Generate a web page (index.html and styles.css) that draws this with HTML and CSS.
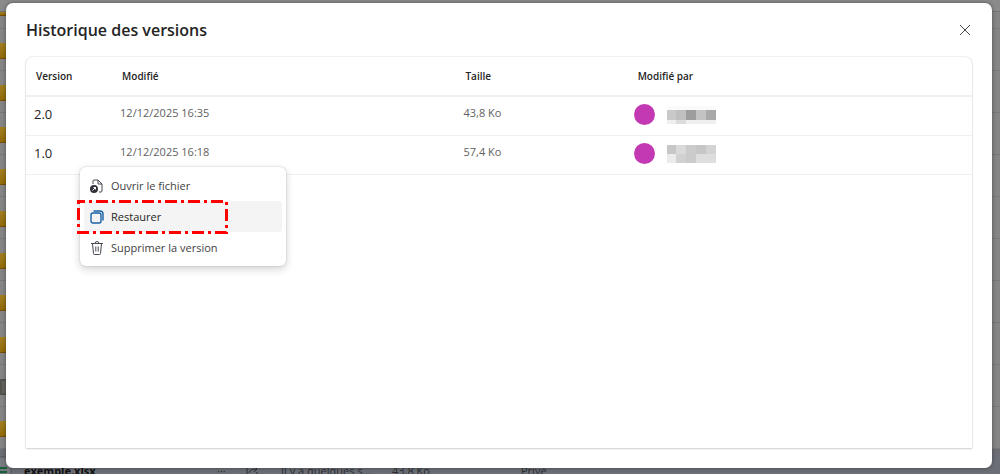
FILE: index.html
```html
<!DOCTYPE html>
<html lang="fr">
<head>
<meta charset="utf-8">
<title>Historique des versions</title>
<link rel="stylesheet" href="styles.css">
</head>
<body>
<div class="files" aria-hidden="true">
  <div class="files-head"></div>
  <div class="file first"><span class="folder"></span></div>
  <div class="file"><span class="folder"></span></div>
  <div class="file"><span class="folder"></span></div>
  <div class="file"><span class="folder"></span></div>
  <div class="file"><span class="folder"></span></div>
  <div class="file"><span class="folder"></span></div>
  <div class="file"><span class="folder"></span></div>
  <div class="file"><span class="folder"></span></div>
  <div class="file"><span class="folder"></span></div>
  <div class="file"><span class="archive"></span></div>
  <div class="file"><span class="folder"></span></div>
  <div class="file selected">
    <svg class="sheet" viewBox="0 0 12 30"><path d="M0 1h11v28H0" fill="#777a7e" stroke="#55585c"/><path d="M0 12h7M0 16h7M0 20h7" stroke="#17613a" stroke-width="2"/></svg>
    <b class="f-name">exemple.xlsx</b>
    <span class="f-more">···</span>
    <svg class="f-share" viewBox="0 0 12 12"><path d="M5 1H1v10h10V7M3 8c1-3 3-4 7-4M8 1l3 3-3 3" fill="none" stroke="#2c2e33"/></svg>
    <span class="f-date">Il y a quelques s...</span>
    <span class="f-size">43,8 Ko</span>
    <span class="f-access">Privé</span>
  </div>
</div>

<section class="dialog" role="dialog" aria-labelledby="title">
  <header class="dialog-head">
    <h1 id="title">Historique des versions</h1>
    <button class="close" type="button" aria-label="Fermer"><svg viewBox="0 0 12 12"><path d="M1 1l10 10M11 1L1 11" stroke="#444" fill="none"/></svg></button>
  </header>
  <div class="panel">
    <table class="versions">
      <thead>
        <tr><th class="c-version">Version</th><th class="c-date">Modifié</th><th class="c-size">Taille</th><th>Modifié par</th></tr>
      </thead>
      <tbody>
        <tr>
          <td class="num">2.0</td><td>12/12/2025 16:35</td><td>43,8 Ko</td>
          <td><div class="person"><span class="avatar"></span>
            <svg class="mask" viewBox="0 0 49 18" shape-rendering="crispEdges"><path fill="#fafafa" d="M0 0h49v4H0z"/><path fill="#c9c9c9" d="M0 4h9v10H0z"/><path fill="#bfbfbf" d="M9 4h10v10H9z"/><path fill="#9d9d9d" d="M19 4h10v10H19z"/><path fill="#c3c3c3" d="M29 4h10v10H29z"/><path fill="#a9a9a9" d="M39 4h10v10H39z"/><path fill="#efefef" d="M0 14h49v5H0z"/><path fill="#dcdcdc" d="M9 14h10v5H9z"/></svg></div></td>
        </tr>
        <tr>
          <td class="num">1.0</td><td>12/12/2025 16:18</td><td>57,4 Ko</td>
          <td><div class="person"><span class="avatar"></span>
            <svg class="mask" viewBox="0 0 49 18" shape-rendering="crispEdges"><path fill="#c7c7c7" d="M0 0h9v9H0z"/><path fill="#dadada" d="M9 0h10v9H9z"/><path fill="#cbcbcb" d="M19 0h10v18H19z"/><path fill="#c6c6c6" d="M29 0h10v9H29z"/><path fill="#d3d3d3" d="M39 0h10v9H39z"/><path fill="#ebebeb" d="M0 9h9v9H0z"/><path fill="#d1d1d1" d="M9 9h10v9H9z"/><path fill="#dedede" d="M29 9h20v9H29z"/></svg></div></td>
        </tr>
      </tbody>
    </table>
  </div>
</section>

<div class="menu" role="menu">
  <button class="item" type="button" role="menuitem">
    <svg viewBox="0 0 14 14" fill="none" stroke="#4a4550"><path d="M3 5V2q0-1 1-1h4l4 4v7q0 1-1 1H9M8 1v4h4"/><circle cx="4" cy="10" r="4" fill="#33313a" stroke="none"/><path d="M2.500 11.500l3-3M3.500 8.500h2v2" stroke="#fff"/></svg>
    Ouvrir le fichier</button>
  <button class="item active" type="button" role="menuitem">
    <svg viewBox="0 0 14 14" fill="none" stroke="#1762a6" stroke-width="1.400"><rect x="1" y="3" width="10" height="10" rx="2"/><path d="M3.500 1H10q3 0 3 3v6.500"/></svg>
    Restaurer</button>
  <button class="item" type="button" role="menuitem">
    <svg viewBox="0 0 14 14" fill="none" stroke="#4a4550"><path d="M1 2.500h12M5 2.500q0-2 2-2t2 2M2.500 2.500l1 10q0 1 1 1h5q1 0 1-1l1-10M5.800 5.500v5M8.200 5.500v5"/></svg>
    Supprimer la version</button>
  <svg class="highlight" viewBox="0 0 151 34"><path d="M0 1.500h149.500v31H1.500V0"/></svg>
</div>
</body>
</html>
```
FILE: styles.css
```css
* { box-sizing: border-box; }
body {
  margin: 0;
  height: 100vh;
  overflow: hidden;
  position: relative;
  background: #858585;
  color: #242424;
  font-family: "Segoe UI", "Open Sans", "Noto Sans", sans-serif;
  font-size: 11px;
}

.files-head { height: 12px; border-bottom: 1px solid #747474; background: #8b8b8b; }
.file {
  height: 42px;
  display: flex;
  align-items: center;
  padding-top: 2px;
  border-bottom: 1px solid #787878;
}
.file.first { height: 17px; padding: 0; align-items: flex-start; }
.file.first .folder { height: 4px; }
.folder {
  width: 14px;
  height: 16px;
  background: linear-gradient(#a18022, #916a08);
  border-bottom: 1px solid #7c4c08;
}
.archive { width: 14px; height: 16px; background: #66645f; border: 2px solid #55534f; }
.file.selected { background: #6b6e75; color: #2c2e33; white-space: nowrap; }
.sheet { width: 12px; height: 30px; flex: none; }
.f-name { margin-left: 12px; width: 193px; color: #111; }
.f-more { width: 29px; }
.f-share { width: 12px; height: 12px; margin-right: 23px; }
.f-date { width: 111px; }
.f-size { width: 129px; }

.dialog {
  position: absolute;
  inset: 3px 8px 6px 6px;
  display: flex;
  flex-direction: column;
  padding: 14px 20px 20px;
  background: #fff;
  border-radius: 7px;
  box-shadow: 0 0 4px rgba(0, 0, 0, .4);
}
.dialog-head {
  display: flex;
  justify-content: space-between;
  align-items: center;
  height: 26px;
  margin-bottom: 14px;
}
h1 { margin: 0; font-size: 16px; line-height: 24px; font-weight: 600; }
.close { border: 0; background: none; padding: 0; width: 14px; height: 24px; display: grid; place-items: center; }
.close svg { width: 12px; height: 12px; }

.panel {
  flex: 1;
  border-radius: 7px 7px 0 0;
  box-shadow: 0 0 2px rgba(0, 0, 0, .2), 0 1px 2px rgba(0, 0, 0, .14);
}
.versions { width: 100%; border-collapse: collapse; table-layout: fixed; }
.versions th {
  height: 39px;
  padding: 0 10px;
  text-align: left;
  font-size: 10px;
  font-weight: 600;
  border-bottom: 2px solid #f0f0f0;
}
.versions td {
  height: 39px;
  padding: 0 8px 7px;
  color: #616161;
  border-bottom: 1px solid #f0f0f0;
}
.versions .num { padding-bottom: 4px; font-size: 13px; color: #242424; }
.versions td:last-child { padding: 0 6px 2px; }
.c-version { width: 9.1%; }
.c-date { width: 36.3%; }
.c-size { width: 18.2%; }
.person { display: flex; align-items: center; gap: 12px; }
.avatar { width: 21px; height: 21px; border-radius: 50%; background: #c239b3; }
.mask { width: 49px; height: 18px; }

.menu {
  position: absolute;
  left: 80px;
  top: 167px;
  width: 206px;
  padding: 3px 4px;
  background: #fff;
  border-radius: 6px;
  box-shadow: 0 0 2px rgba(0, 0, 0, .2), 0 3px 8px rgba(0, 0, 0, .18);
}
.item {
  display: flex;
  align-items: center;
  gap: 7px;
  width: 100%;
  height: 31px;
  padding: 0 6px;
  border: 0;
  border-radius: 3px;
  background: none;
  color: #424242;
  font: inherit;
  text-align: left;
}
.item svg { width: 14px; height: 14px; }
.item.active { background: #f4f4f4; color: #242424; }
.highlight { position: absolute; left: -3px; top: 33px; width: 151px; height: 34px; pointer-events: none; }
.highlight path { fill: none; stroke: #f00; stroke-width: 3; stroke-dasharray: 12 4 3 4; stroke-dashoffset: 4; }
```
